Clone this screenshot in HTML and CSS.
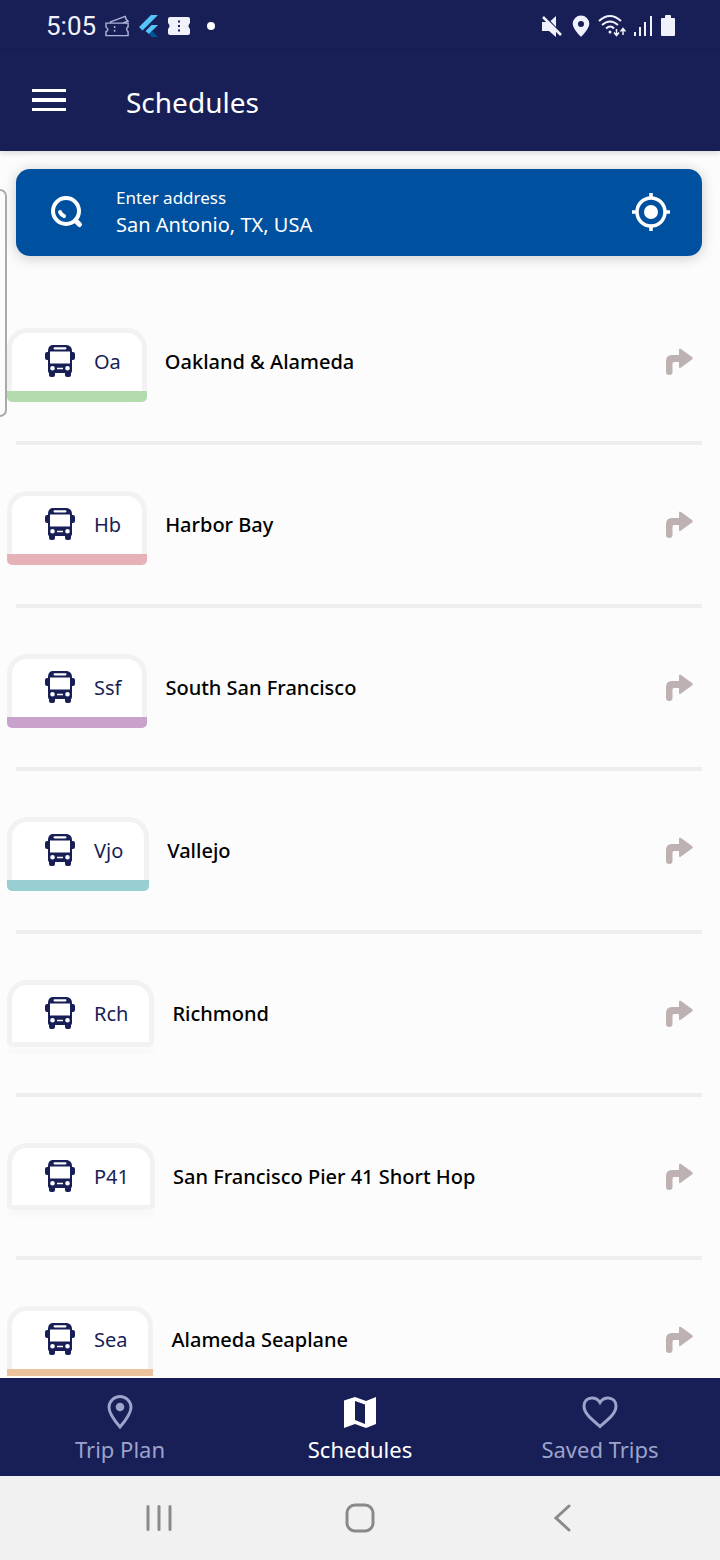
FILE: index.html
```html
<!DOCTYPE html>
<html lang="en">

<head>
    <meta charset="UTF-8">
    <meta name="viewport" content="width=device-width, initial-scale=1.0">
    <title>Schedules</title>
    <link rel="stylesheet" href="styles.css">
</head>

<body>

    <!-- Shared icons -->
    <svg class="sprite" aria-hidden="true">
        <symbol id="bus" viewBox="0 0 32 32">
            <path fill="currentColor" fill-rule="evenodd" d="M8 0h15q5 1 5 6v1h1q2 0 2 2v4q0 2-2 2h-1v11q0 1.500-1 2v2q0 2-2 2h-2q-2 0-2-2v-2H11v2q0 2-2 2H7q-2 0-2-2v-2q-1-.5-1-2V15H3q-2 0-2-2V9q0-2 2-2h1V6q0-5 4-6zM10.500 2.200q-1 0-1 1.100t1 1.100h11q1 0 1-1.100t-1-1.100zM6 6.500V18.500h20V6.500zM8.500 21a2.300 2.300 0 1 0 0 4.600 2.300 2.300 0 0 0 0-4.600zM23.500 21a2.300 2.300 0 1 0 0 4.600 2.300 2.300 0 0 0 0-4.600zM13 22.800v1.500h6v-1.500z" />
        </symbol>
        <symbol id="turn" viewBox="0 0 28 28">
            <path fill="currentColor" d="M1 24V13q0-6 6-6h7V2q0-2.500 2-1l11 8q1.500 1.300 0 2.600l-11 8q-2 1.500-2-1V14H9q-1.500 0-1.500 1.500V24q0 3-3.200 3T1 24z" />
        </symbol>
    </svg>

    <div class="status-bar">
        <div class="status-group">
            <span class="clock">5:05</span>
            <svg width="25" height="24" viewBox="0 0 26 24" fill="none" stroke="#aeb4d8" stroke-width="1.500">
                <path d="M1 9h23v4q-3 2 0 5v4H1v-4q4-2 0-5zM5 8l16-6 1 3 2 2-6 2" />
                <path d="M10 12v8" stroke-dasharray="2 2" />
            </svg>
            <svg width="20" height="24" viewBox="0 0 20 24">
                <path fill="#54c5f8" d="M0 13L12 1h7L3.500 16.500zM6.500 17l6-6H19l-6 6-3 3z" />
                <path fill="#01579b" d="M10 20l3-3 6 6h-6z" />
            </svg>
            <svg width="22" height="24" viewBox="0 0 22 24">
                <path fill="#f0f1fa" fill-rule="evenodd" d="M2 3h18q2 0 2 2v4q-3 3 0 6v4q0 2-2 2H2q-2 0-2-2v-4q3-3 0-6V5q0-2 2-2zM10 6.500v2h2v-2zM10 11v2h2v-2zM10 15.500v2h2v-2z" />
            </svg>
            <span class="status-dot"></span>
        </div>
        <div class="status-group status-right">
            <svg width="22" height="24" viewBox="0 0 22 24" fill="#f0f1fa">
                <path d="M0 8h5l9 9v6l-7-6H0zM8.500 7L14 2v11z" />
                <path d="M1 3l18 18" stroke="#f0f1fa" stroke-width="2.500" />
            </svg>
            <svg width="18" height="24" viewBox="0 0 18 24">
                <path fill="#f0f1fa" fill-rule="evenodd" d="M9 1.500a8.300 8.300 0 0 1 8.300 8.300C17.300 15 9 23 9 23S.7 15 .7 9.800A8.300 8.300 0 0 1 9 1.500zM9 7a3 3 0 1 0 0 6 3 3 0 0 0 0-6z" />
            </svg>
            <svg width="28" height="24" viewBox="0 0 28 24" fill="none" stroke="#f0f1fa" stroke-width="2">
                <path d="M1 7q11-10 22 0M4 11q8-7 16 0M8 14.500q4.500-4 8 0" />
                <circle cx="12" cy="18" r="1.500" fill="#f0f1fa" stroke="none" />
                <path d="M18.500 15v6M16 18.500l2.500 3 2.500-3M25 21v-6M22.500 17.500l2.500-3 2.500 3" stroke-width="1.500" />
            </svg>
            <svg width="18" height="24" viewBox="0 0 18 24" stroke="#f0f1fa" stroke-width="2">
                <path d="M1 22v-4M6 22v-9M11 22V8M17 22V2" />
            </svg>
            <svg width="16" height="24" viewBox="0 0 16 24">
                <path fill="#f0f1fa" d="M2 4h3V2q0-1 1-1h4q1 0 1 1v2h3q1 0 1 1v16q0 1-1 1H2q-1 0-1-1V5q0-1 1-1z" />
            </svg>
        </div>
    </div>

    <header class="app-bar">
        <button class="menu-button" type="button" aria-label="Menu">
            <svg width="34" height="24" viewBox="0 0 34 24" fill="currentColor">
                <path d="M0 1h34v3H0zM0 10h34v4H0zM0 20h34v3H0z" />
            </svg>
        </button>
        <h1>Schedules</h1>
    </header>

    <main>
        <form class="search">
            <svg width="34" height="34" viewBox="0 0 34 34" fill="none" stroke="currentColor" stroke-linecap="round">
                <circle cx="16" cy="16" r="13" stroke-width="4" />
                <path d="M25.500 25.500l4 4" stroke-width="5" />
                <path d="M10 17q1 2.500 4 4" stroke-width="4" />
            </svg>
            <div class="search-field">
                <label for="address">Enter address</label>
                <input id="address" type="text" value="San Antonio, TX, USA">
            </div>
            <button class="locate-button" type="button" aria-label="Use my location">
                <svg width="40" height="40" viewBox="0 0 40 40" fill="none" stroke="currentColor">
                    <circle cx="20" cy="20" r="14" stroke-width="3.500" />
                    <path d="M20 1v5M20 34v5M1 20h5M34 20h5" stroke-width="3.500" />
                    <circle cx="20" cy="20" r="7" fill="currentColor" stroke="none" />
                </svg>
            </button>
        </form>

        <ul class="routes">
            <li>
                <a class="route" href="#oakland">
                    <span class="badge green"><span class="badge-box"><svg class="bus"><use href="#bus" /></svg>Oa</span></span>
                    <span class="route-name">Oakland &amp; Alameda</span>
                    <svg class="turn"><use href="#turn" /></svg>
                </a>
            </li>
            <li>
                <a class="route" href="#harbor-bay">
                    <span class="badge pink"><span class="badge-box"><svg class="bus"><use href="#bus" /></svg>Hb</span></span>
                    <span class="route-name">Harbor Bay</span>
                    <svg class="turn"><use href="#turn" /></svg>
                </a>
            </li>
            <li>
                <a class="route" href="#south-sf">
                    <span class="badge purple"><span class="badge-box"><svg class="bus"><use href="#bus" /></svg>Ssf</span></span>
                    <span class="route-name">South San Francisco</span>
                    <svg class="turn"><use href="#turn" /></svg>
                </a>
            </li>
            <li>
                <a class="route" href="#vallejo">
                    <span class="badge teal"><span class="badge-box"><svg class="bus"><use href="#bus" /></svg>Vjo</span></span>
                    <span class="route-name">Vallejo</span>
                    <svg class="turn"><use href="#turn" /></svg>
                </a>
            </li>
            <li>
                <a class="route" href="#richmond">
                    <span class="badge plain"><span class="badge-box"><svg class="bus"><use href="#bus" /></svg>Rch</span></span>
                    <span class="route-name">Richmond</span>
                    <svg class="turn"><use href="#turn" /></svg>
                </a>
            </li>
            <li>
                <a class="route" href="#pier-41">
                    <span class="badge plain"><span class="badge-box"><svg class="bus"><use href="#bus" /></svg>P41</span></span>
                    <span class="route-name">San Francisco Pier 41 Short Hop</span>
                    <svg class="turn"><use href="#turn" /></svg>
                </a>
            </li>
            <li>
                <a class="route" href="#seaplane">
                    <span class="badge orange"><span class="badge-box"><svg class="bus"><use href="#bus" /></svg>Sea</span></span>
                    <span class="route-name">Alameda Seaplane</span>
                    <svg class="turn"><use href="#turn" /></svg>
                </a>
            </li>
        </ul>

        <div class="edge-handle"></div>
    </main>

    <nav class="tabs">
        <a href="#trip-plan">
            <svg width="36" height="36" viewBox="0 0 36 36" fill="none" stroke="currentColor" stroke-width="3">
                <path d="M18 33C12 26 7 19.500 7 13.500a11 11 0 0 1 22 0C29 19.500 24 26 18 33z" />
                <circle cx="18" cy="13" r="4.300" fill="currentColor" stroke="none" />
            </svg>
            Trip Plan
        </a>
        <a class="active" href="#schedules">
            <svg width="36" height="36" viewBox="0 0 36 36" fill="currentColor" fill-rule="evenodd">
                <path d="M2 6.500l11-3.500 11 4 10-4v27l-10 4-11-4-11 4zM13 7v19l10 4V10.500z" />
            </svg>
            Schedules
        </a>
        <a href="#saved-trips">
            <svg width="36" height="36" viewBox="0 0 36 36" fill="none" stroke="currentColor" stroke-width="3">
                <path d="M18 32.500C8 24 2 19 2 12 2 7 5.500 4 10 4c3.500 0 6.500 2 8 4.500C19.500 6 22.500 4 26 4c4.500 0 8 3 8 8 0 7-6 12-16 20.500z" />
            </svg>
            Saved Trips
        </a>
    </nav>

    <div class="system-nav">
        <button type="button" aria-label="Recent apps">
            <svg width="28" height="28" viewBox="0 0 28 28" stroke="currentColor" stroke-width="3" stroke-linecap="round">
                <path d="M3 2.500v23M14 2.500v23M25 2.500v23" />
            </svg>
        </button>
        <button type="button" aria-label="Home">
            <svg width="30" height="30" viewBox="0 0 30 30" fill="none" stroke="currentColor" stroke-width="3">
                <rect x="2" y="2" width="26" height="26" rx="8" />
            </svg>
        </button>
        <button type="button" aria-label="Back">
            <svg width="28" height="28" viewBox="0 0 28 28" fill="none" stroke="currentColor" stroke-width="3" stroke-linecap="round">
                <path d="M22 2L9 14l13 12" />
            </svg>
        </button>
    </div>

</body>

</html>
```
FILE: styles.css
```css
* {
    box-sizing: border-box;
}

body {
    display: flex;
    flex-direction: column;
    height: 100vh;
    margin: 0;
    font-family: 'Noto Sans', 'Open Sans', sans-serif;
    color: #000000;
    background-color: #fcfcfc;
}

svg {
    display: block;
    flex-shrink: 0;
}

button {
    display: flex;
    padding: 0;
    border: none;
    background: none;
    color: inherit;
}

a {
    color: inherit;
    text-decoration: none;
}

.sprite {
    position: absolute;
    width: 0;
    height: 0;
}

/* Phone status bar */
.status-bar {
    display: flex;
    align-items: center;
    justify-content: space-between;
    height: 52px;
    padding: 0 44px 0 46px;
    background-color: #171f56;
    color: #f0f1fa;
}

.status-group {
    display: flex;
    align-items: center;
    gap: 9px;
}

.status-right {
    gap: 8px;
}

.clock {
    font-family: Roboto, sans-serif;
    font-size: 26px;
}

.status-dot {
    width: 8px;
    height: 8px;
    margin-left: 8px;
    border-radius: 50%;
    background-color: #ffffff;
}

.app-bar {
    display: flex;
    align-items: center;
    gap: 60px;
    height: 99px;
    padding: 0 32px;
    background-color: #171f56;
    color: #ffffff;
    box-shadow: 0 2px 6px rgba(0, 0, 0, 0.15);
}

.menu-button {
    padding-bottom: 4px;
}

h1 {
    margin: 0;
    font-size: 28px;
    font-weight: 400;
}

main {
    position: relative;
    display: flex;
    flex: 1;
    flex-direction: column;
    gap: 26px;
    min-height: 0;
    margin-bottom: 2px;
    padding-top: 18px;
}

/* Address search */
.search {
    display: flex;
    align-items: center;
    height: 87px;
    margin: 0 18px 0 16px;
    padding: 0 31px 2px 34px;
    border-radius: 14px;
    background-color: #0050a0;
    color: #ffffff;
    box-shadow: 0 2px 14px rgba(0, 0, 0, 0.2);
}

.search-field {
    display: flex;
    flex: 1;
    flex-direction: column;
    min-width: 0;
    margin-left: 32px;
}

.search label {
    font-size: 17px;
    line-height: 26px;
}

.search input {
    width: 100%;
    height: 28px;
    padding: 0;
    border: none;
    background: none;
    color: inherit;
    font-family: inherit;
    font-size: 20px;
}

/* Route list */
.routes {
    flex: 1;
    min-height: 0;
    margin: 0;
    padding: 0 18px 0 7px;
    overflow-y: auto;
    scrollbar-width: none;
    list-style: none;
}

.routes li::after {
    content: '';
    display: block;
    height: 4px;
    margin-left: 9px;
    background-color: #eeeeee;
}

.route {
    display: flex;
    align-items: center;
    height: 159px;
    padding-right: 9px;
}

.route-name {
    flex: 1;
    margin-left: 18px;
    font-size: 20px;
    font-weight: 500;
}

.badge {
    height: 74px;
    margin-top: 7px;
    border-radius: 20px 20px 5px 5px;
    border-bottom: 11px solid;
}

.badge-box {
    display: flex;
    align-items: center;
    gap: 18px;
    height: 63px;
    padding: 0 21px 2px 32px;
    border: 5px solid #f2f2f2;
    border-bottom: none;
    border-radius: 20px 20px 0 0;
    background-color: #ffffff;
    color: #171f56;
    font-size: 20px;
}

.green {
    border-color: #b3dbae;
}

.pink {
    border-color: #e6b2b8;
}

.purple {
    border-color: #c9a2cc;
}

.teal {
    border-color: #98cfd2;
}

.orange {
    border-color: #ecc29c;
}

.plain {
    border-bottom: 7px solid #f9f9f9;
}

.plain .badge-box {
    height: 67px;
    padding-bottom: 1px;
    border-bottom: 5px solid #f2f2f2;
    border-radius: 20px 20px 5px 5px;
}

.bus {
    width: 32px;
    height: 32px;
}

.turn {
    width: 28px;
    height: 28px;
    color: #bdb1b1;
}

/* Edge panel handle of the phone */
.edge-handle {
    position: absolute;
    top: 38px;
    left: 0;
    width: 7px;
    height: 228px;
    border: 2px solid #aaaaaa;
    border-left: none;
    border-radius: 0 7px 7px 0;
    background-color: #fcfcfc;
}

.tabs {
    display: grid;
    grid-template-columns: repeat(3, 1fr);
    height: 98px;
    padding-top: 16px;
    background-color: #171f56;
    color: #9da3cb;
    font-size: 22px;
    line-height: 38px;
}

.tabs a {
    display: flex;
    flex-direction: column;
    align-items: center;
}

.tabs .active {
    color: #ffffff;
}

.system-nav {
    display: flex;
    align-items: center;
    justify-content: space-between;
    height: 84px;
    padding: 0 145px;
    background-color: #f1f1f1;
    color: #8a8a8a;
}
```
